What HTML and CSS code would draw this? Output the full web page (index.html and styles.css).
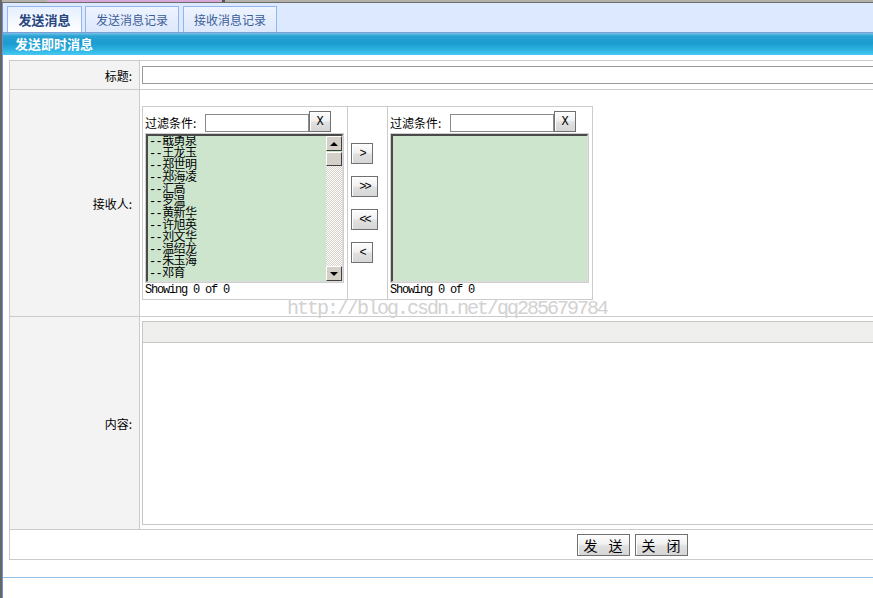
FILE: index.html
```html
<!DOCTYPE html>
<html lang="zh-CN">
<head>
<meta charset="utf-8">
<title>发送即时消息</title>
<link rel="stylesheet" href="styles.css">
</head>
<body>
<div class="page">
  <div class="topstrip"><span class="strip-pink"></span></div>
  <div class="main">
    <div class="tabbar">
      <div class="tab tab-active">发送消息</div>
      <div class="tab tab-wide">发送消息记录</div>
      <div class="tab tab-wide">接收消息记录</div>
    </div>
    <div class="titlebar">发送即时消息</div>
    <div class="content">
      <div class="form">
        <div class="lbl">标题:</div>
        <div class="fld"><input class="txt-title" type="text"></div>

        <div class="lbl">接收人:</div>
        <div class="fld">
          <div class="picker">
            <div class="pick-side">
              <div class="filter"><span class="filter-lbl">过滤条件:</span><input class="filter-input" type="text"><button class="btn btn-x">X</button></div>
              <div class="listbox">
                <div class="lb-well">
                  <div class="list-items">
                    <div class="item">--戢勇泉</div>
                    <div class="item">--王龙玉</div>
                    <div class="item">--郑世明</div>
                    <div class="item">--郑海凌</div>
                    <div class="item">--汇高</div>
                    <div class="item">--罗温</div>
                    <div class="item">--黄新华</div>
                    <div class="item">--许旭英</div>
                    <div class="item">--刘文华</div>
                    <div class="item">--温绍龙</div>
                    <div class="item">--朱玉海</div>
                    <div class="item">--邓育</div>
                  </div>
                  <div class="scrollbar">
                    <div class="sb-btn"><span class="arrow-up"></span></div>
                    <div class="sb-thumb"></div>
                    <div class="sb-track"></div>
                    <div class="sb-btn"><span class="arrow-down"></span></div>
                  </div>
                </div>
              </div>
              <div class="showing">Showing 0 of 0</div>
            </div>
            <div class="pick-mid">
              <button class="btn btn-move">&gt;</button>
              <button class="btn btn-move btn-move-wide">&gt;&gt;</button>
              <button class="btn btn-move btn-move-wide">&lt;&lt;</button>
              <button class="btn btn-move">&lt;</button>
            </div>
            <div class="pick-side">
              <div class="filter"><span class="filter-lbl">过滤条件:</span><input class="filter-input" type="text"><button class="btn btn-x">X</button></div>
              <div class="listbox">
                <div class="lb-well"></div>
              </div>
              <div class="showing">Showing 0 of 0</div>
            </div>
          </div>
        </div>

        <div class="lbl">内容:</div>
        <div class="fld">
          <div class="editor">
            <div class="editor-toolbar"></div>
            <div class="editor-body"></div>
          </div>
        </div>

        <div class="actions">
          <button class="btn btn-action"><span>发</span><span>送</span></button>
          <button class="btn btn-action"><span>关</span><span>闭</span></button>
        </div>
      </div>
    </div>
    <div class="bottomline"></div>
  </div>
</div>
<div class="watermark">http://blog.csdn.net/qq285679784</div>
</body>
</html>
```

FILE: styles.css
```css
html, body {
  margin: 0;
  padding: 0;
  overflow: hidden;
  background: #fff;
}

body {
  font-family: "Noto Sans CJK SC", "Liberation Sans", sans-serif;
  font-size: 12px;
  color: #000;
  width: 873px;
  height: 598px;
  position: relative;
}

.page {
  width: 1264px;
  height: 598px;
  border-left: 2px solid #666;
}

.topstrip {
  box-sizing: border-box;
  height: 3px;
  background: #b4b1a9;
  border-bottom: 1px solid #6d6d6d;
  display: flex;
}

.strip-pink {
  margin-left: 45px;
  width: 175px;
  height: 2px;
  background: #d9a8d8;
  border-right: 3px solid #555;
}

.main {
  border-left: 1px solid #6f92cc;
  height: 595px;
}

.tabbar {
  box-sizing: border-box;
  height: 30px;
  background: #dde9fe;
  border-bottom: 1px solid #7c9fd8;
  display: flex;
  align-items: flex-end;
  padding-left: 4px;
}

.tab {
  box-sizing: border-box;
  height: 26px;
  width: 94px;
  border: 1px solid #93b5e9;
  border-bottom: none;
  background: linear-gradient(#eef4ff, #dde8fc);
  color: #3c5d97;
  font-size: 12px;
  line-height: 25px;
  text-align: center;
  margin-right: 4px;
}

.tab-active {
  width: 75px;
  margin-right: 3px;
  font-size: 13px;
  font-weight: bold;
  color: #27467e;
  background: linear-gradient(#e6effe, #ffffff);
}

.titlebar {
  height: 22px;
  line-height: 22px;
  padding-left: 12px;
  color: #fff;
  font-size: 13px;
  font-weight: bold;
  background: linear-gradient(#74c4e6 0%, #2aa3d4 14%, #1b9bcf 45%, #27acdc 70%, #46c9f3 100%);
}

.content {
  padding: 5px 0 0 6px;
}

.form {
  display: grid;
  grid-template-columns: 129px 1114px;
  grid-template-rows: 28px 226px 212px 29px;
  gap: 1px;
  padding: 1px;
  background: #cbcbcb;
  width: 1246px;
  box-sizing: border-box;
}

.lbl {
  background: #f3f3f3;
  display: flex;
  align-items: center;
  justify-content: flex-end;
  padding-right: 7px;
}

.fld {
  background: #fff;
  display: flex;
  align-items: center;
  padding-left: 2px;
}

.txt-title {
  box-sizing: border-box;
  display: block;
  width: 1100px;
  height: 18px;
  margin: 0;
  border: 1px solid #9a9a9a;
  background: #fff;
}

.picker {
  display: grid;
  grid-template-columns: 204px 39px 204px;
  height: 194px;
  width: 451px;
  box-sizing: border-box;
  gap: 1px;
  padding: 1px;
  background: #cccccc;
}

.pick-side {
  background: #fff;
  padding: 4px 0 0 2px;
}

.filter {
  display: flex;
  align-items: flex-end;
  height: 21px;
}

.filter-lbl {
  width: 60px;
  line-height: 18px;
}

.filter-input {
  box-sizing: border-box;
  width: 104px;
  height: 18px;
  margin: 0;
  border: 1px solid #8a8a8a;
  background: #fff;
}

.btn {
  box-sizing: border-box;
  margin: 0;
  padding: 0;
  border: 1px solid #707070;
  background: linear-gradient(#fdfdfd 0%, #f1f1f1 45%, #e0e0e0 55%, #d6d6d6 100%);
  box-shadow: inset 1px 1px #fff;
  color: #000;
  font-family: "Liberation Mono", monospace;
  font-size: 12px;
  line-height: 1;
  cursor: default;
}

.btn-x {
  width: 22px;
  height: 21px;
}

.listbox {
  margin-top: 1px;
  width: 199px;
  height: 150px;
  box-sizing: border-box;
  border: 1px solid #cfcfcf;
  display: flex;
}

.lb-well {
  flex: 1;
  display: flex;
  background: #cce5cc;
  border-top: 2px solid #4a4a4a;
  border-left: 2px solid #4a4a4a;
  border-right: 1px solid #dcdcdc;
  border-bottom: 1px solid #dcdcdc;
  overflow: hidden;
}

.list-items {
  flex: 1;
  padding-left: 1px;
  font-family: "Liberation Mono", "Noto Sans CJK SC", monospace;
  font-size: 12px;
  line-height: 12px;
  overflow: hidden;
  white-space: nowrap;
}

.item {
  height: 12px;
  letter-spacing: -0.6px;
}

.scrollbar {
  width: 16px;
  display: flex;
  flex-direction: column;
}

.sb-btn {
  box-sizing: border-box;
  height: 15px;
  background: #d4d0c8;
  border: 1px solid;
  border-color: #fff #404040 #404040 #fff;
  display: flex;
  align-items: center;
  justify-content: center;
}

.sb-thumb {
  box-sizing: border-box;
  height: 14px;
  margin-top: 1px;
  background: #d4d0c8;
  border: 1px solid;
  border-color: #fff #404040 #404040 #fff;
}

.sb-track {
  flex: 1;
  background: repeating-conic-gradient(#d4d0c8 0 25%, #fff 0 50%) 0 0 / 2px 2px;
}

.arrow-up {
  width: 0;
  height: 0;
  border-left: 4px solid transparent;
  border-right: 4px solid transparent;
  border-bottom: 4px solid #000;
}

.arrow-down {
  width: 0;
  height: 0;
  border-left: 4px solid transparent;
  border-right: 4px solid transparent;
  border-top: 4px solid #000;
}

.showing {
  font-family: "Liberation Mono", monospace;
  font-size: 12px;
  letter-spacing: -1.2px;
  line-height: 15px;
}

.pick-mid {
  background: #fff;
  padding: 36px 0 0 3px;
  display: flex;
  flex-direction: column;
  align-items: flex-start;
  gap: 12px;
}

.btn-move {
  width: 22px;
  height: 21px;
  letter-spacing: -2px;
}

.btn-move-wide {
  width: 27px;
}

.editor {
  box-sizing: border-box;
  width: 1105px;
  height: 204px;
  border: 1px solid #c6c6c6;
  display: flex;
  flex-direction: column;
}

.editor-toolbar {
  height: 20px;
  background: #efefed;
  border-bottom: 1px solid #c6c6c6;
}

.editor-body {
  flex: 1;
  background: #fff;
}

.actions {
  grid-column: 1 / 3;
  background: #fff;
  display: flex;
  align-items: center;
  justify-content: center;
  gap: 5px;
}

.btn-action {
  width: 53px;
  height: 22px;
  display: flex;
  align-items: center;
  justify-content: center;
  gap: 11px;
  font-family: "Noto Sans CJK SC", sans-serif;
  font-size: 14px;
}

.bottomline {
  margin-top: 17px;
  height: 1px;
  background: #98bfe6;
}

.watermark {
  position: absolute;
  left: 287px;
  top: 299px;
  font-family: "Liberation Mono", monospace;
  font-size: 20px;
  letter-spacing: -2px;
  line-height: 20px;
  color: #d2d2d2;
  white-space: nowrap;
  pointer-events: none;
}
```
